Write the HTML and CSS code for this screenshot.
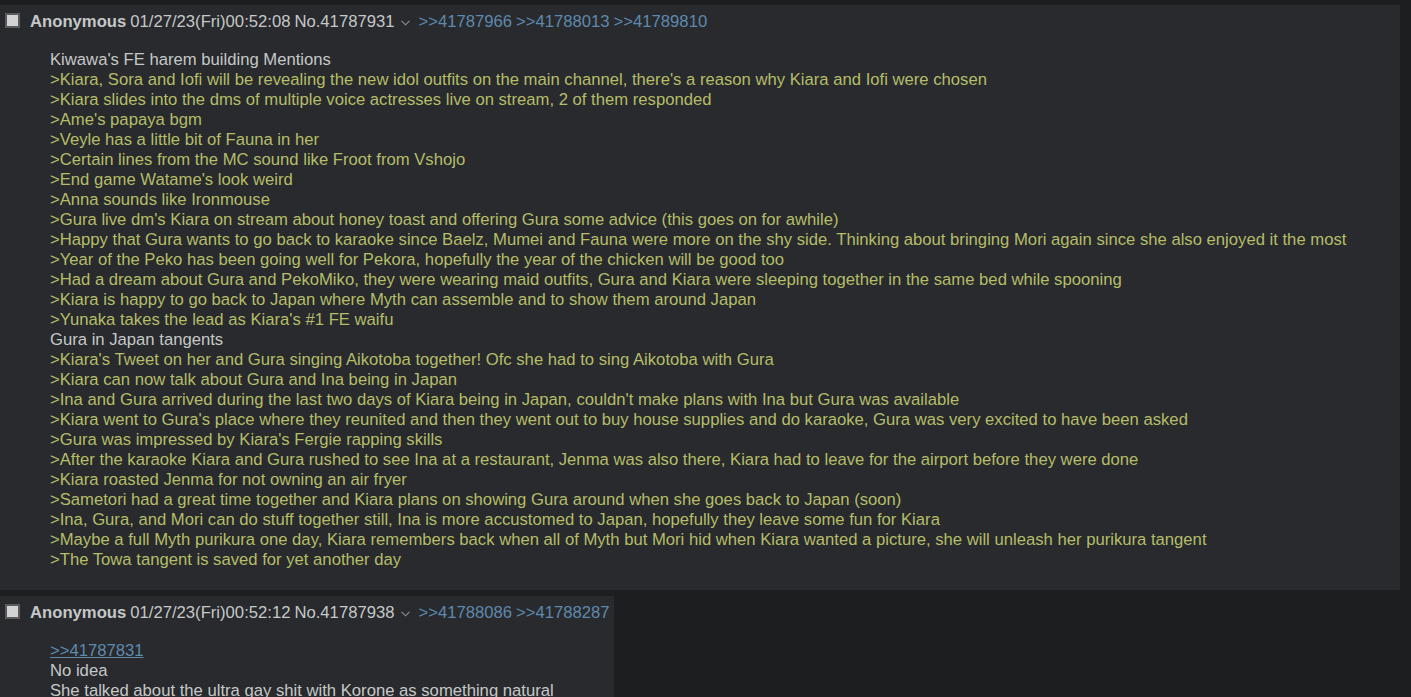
FILE: index.html
```html
<!DOCTYPE html>
<html lang="en">
<head>
    <meta charset="UTF-8">
    <meta name="viewport" content="width=device-width, initial-scale=1.0">
    <title>/vt/ - Virtual YouTubers</title>
    <link rel="stylesheet" href="styles.css">
</head>
<body>
    <div class="thread">
        <div class="post post-wide">
            <div class="post-info">
                <span class="check"></span>
                <span class="name">Anonymous</span>
                <span class="date">01/27/23(Fri)00:52:08</span>
                <span class="num">No.41787931</span><span class="menu"><svg width="9" height="6" viewBox="0 0 9 6"><polyline points="0.5,0.8 4.5,4.8 8.5,0.8" fill="none" stroke="#8b8e92" stroke-width="1.1"/></svg></span><a class="backlink" href="#">&gt;&gt;41787966</a> <a class="backlink" href="#">&gt;&gt;41788013</a> <a class="backlink" href="#">&gt;&gt;41789810</a>
            </div>
            <blockquote class="message">
                Kiwawa's FE harem building Mentions<br>
                <span class="quote">&gt;Kiara, Sora and Iofi will be revealing the new idol outfits on the main channel, there's a reason why Kiara and Iofi were chosen</span><br>
                <span class="quote">&gt;Kiara slides into the dms of multiple voice actresses live on stream, 2 of them responded</span><br>
                <span class="quote">&gt;Ame's papaya bgm</span><br>
                <span class="quote">&gt;Veyle has a little bit of Fauna in her</span><br>
                <span class="quote">&gt;Certain lines from the MC sound like Froot from Vshojo</span><br>
                <span class="quote">&gt;End game Watame's look weird</span><br>
                <span class="quote">&gt;Anna sounds like Ironmouse</span><br>
                <span class="quote">&gt;Gura live dm's Kiara on stream about honey toast and offering Gura some advice (this goes on for awhile)</span><br>
                <span class="quote">&gt;Happy that Gura wants to go back to karaoke since Baelz, Mumei and Fauna were more on the shy side. Thinking about bringing Mori again since she also enjoyed it the most</span><br>
                <span class="quote">&gt;Year of the Peko has been going well for Pekora, hopefully the year of the chicken will be good too</span><br>
                <span class="quote">&gt;Had a dream about Gura and PekoMiko, they were wearing maid outfits, Gura and Kiara were sleeping together in the same bed while spooning</span><br>
                <span class="quote">&gt;Kiara is happy to go back to Japan where Myth can assemble and to show them around Japan</span><br>
                <span class="quote">&gt;Yunaka takes the lead as Kiara's #1 FE waifu</span><br>
                Gura in Japan tangents<br>
                <span class="quote">&gt;Kiara's Tweet on her and Gura singing Aikotoba together! Ofc she had to sing Aikotoba with Gura</span><br>
                <span class="quote">&gt;Kiara can now talk about Gura and Ina being in Japan</span><br>
                <span class="quote">&gt;Ina and Gura arrived during the last two days of Kiara being in Japan, couldn't make plans with Ina but Gura was available</span><br>
                <span class="quote">&gt;Kiara went to Gura's place where they reunited and then they went out to buy house supplies and do karaoke, Gura was very excited to have been asked</span><br>
                <span class="quote">&gt;Gura was impressed by Kiara's Fergie rapping skills</span><br>
                <span class="quote">&gt;After the karaoke Kiara and Gura rushed to see Ina at a restaurant, Jenma was also there, Kiara had to leave for the airport before they were done</span><br>
                <span class="quote">&gt;Kiara roasted Jenma for not owning an air fryer</span><br>
                <span class="quote">&gt;Sametori had a great time together and Kiara plans on showing Gura around when she goes back to Japan (soon)</span><br>
                <span class="quote">&gt;Ina, Gura, and Mori can do stuff together still, Ina is more accustomed to Japan, hopefully they leave some fun for Kiara</span><br>
                <span class="quote">&gt;Maybe a full Myth purikura one day, Kiara remembers back when all of Myth but Mori hid when Kiara wanted a picture, she will unleash her purikura tangent</span><br>
                <span class="quote">&gt;The Towa tangent is saved for yet another day</span>
            </blockquote>
        </div>

        <div class="post">
            <div class="post-info">
                <span class="check"></span>
                <span class="name">Anonymous</span>
                <span class="date">01/27/23(Fri)00:52:12</span>
                <span class="num">No.41787938</span><span class="menu"><svg width="9" height="6" viewBox="0 0 9 6"><polyline points="0.5,0.8 4.5,4.8 8.5,0.8" fill="none" stroke="#8b8e92" stroke-width="1.1"/></svg></span><a class="backlink" href="#">&gt;&gt;41788086</a> <a class="backlink" href="#">&gt;&gt;41788287</a>
            </div>
            <blockquote class="message">
                <a class="quotelink" href="#">&gt;&gt;41787831</a><br>
                No idea<br>
                She talked about the ultra gay shit with Korone as something natural
            </blockquote>
        </div>
    </div>
</body>
</html>
```

FILE: styles.css
```css
* {
    margin: 0;
    padding: 0;
    box-sizing: border-box;
}

body {
    font-family: "Liberation Sans", Arial, sans-serif;
    font-size: 16.66px;
    line-height: 20px;
    background-color: #1d1e20;
    color: #c5c8c6;
    overflow: hidden;
}

.thread {
    padding: 5px 11px 0 0;
}

.post {
    background-color: #282a2e;
    width: fit-content;
    padding: 7px 4px 20px 5px;
    margin-bottom: 6px;
}

.post-wide {
    width: auto;
}

.post-info {
    display: flex;
    align-items: center;
    white-space: nowrap;
}

.check {
    width: 15px;
    height: 15px;
    background-color: #d3d3d3;
    border: 2px solid #5a5b5d;
    margin-right: 10px;
    margin-top: -3px;
}

.name {
    font-weight: bold;
    margin-right: 4px;
}

.date {
    margin-right: 4px;
}

.menu {
    display: inline-flex;
    margin: 2px 8px 0 7px;
}

.backlink {
    color: #5f89ac;
    text-decoration: none;
    margin-right: 4px;
}

.backlink:last-child {
    margin-right: 0;
}

.message {
    margin: 18px 40px 0 45px;
}

.quote {
    color: #b5bd68;
}

.quotelink {
    color: #5f89ac;
    text-decoration: underline;
}
```
